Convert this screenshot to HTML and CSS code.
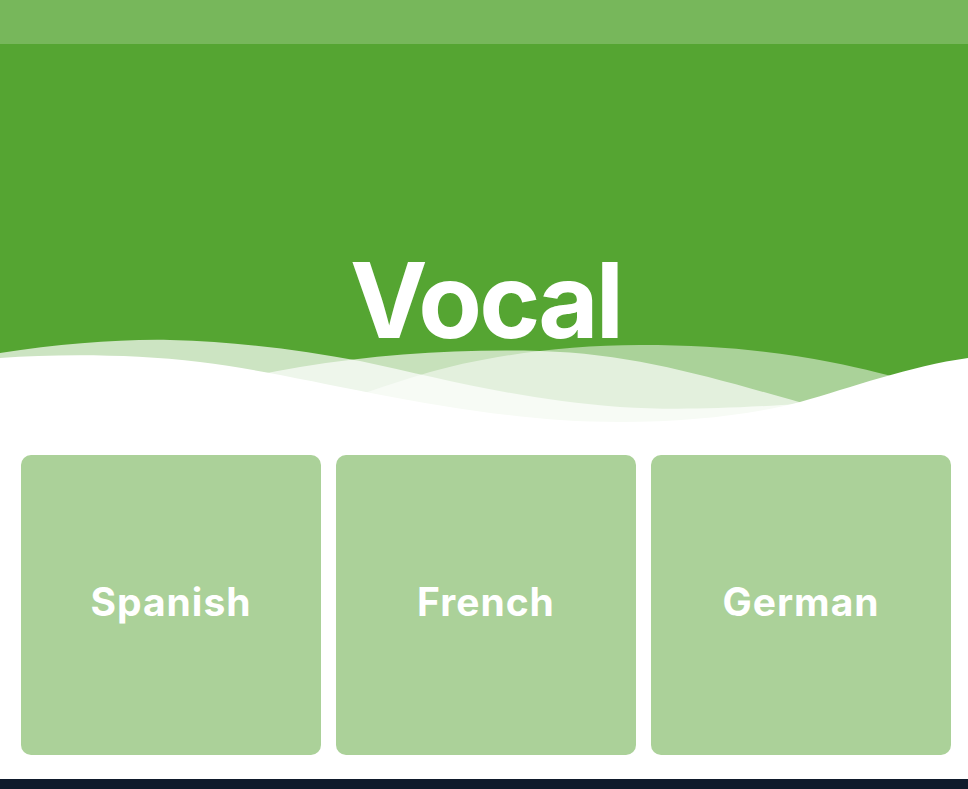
FILE: index.html
```html
<!DOCTYPE html>
<html lang="en">
<head>
<meta charset="utf-8">
<title>Vocal</title>
<link rel="stylesheet" href="styles.css">
</head>
<body>
<div class="topbar"></div>
<header class="hero">
  <h1 class="title">Vocal</h1>
  <svg class="waves" viewBox="0 8 968 92" preserveAspectRatio="none" aria-hidden="true">
    <path fill="#fff" fill-opacity="0.7" d="M0,23 C60,14 120,9 170,10 C240,12 300,20 360,31 C440,48 520,70 620,77 C700,82 780,76 968,62 V100 H0 Z"/>
    <path fill="#fff" fill-opacity="0.67" d="M0,90 C120,80 220,50 300,37 C380,24 460,19 540,21 C640,24 720,50 820,78 C880,92 930,98 968,100 V100 H0 Z"/>
    <path fill="#fff" fill-opacity="0.5" d="M250,100 C320,80 370,60 420,45 C480,27 560,15 640,15 C720,15 780,22 830,32 C900,46 940,60 968,70 V100 Z"/>
    <path fill="#fff" d="M0,28 C60,24 130,24 200,32 C300,44 420,80 560,90 C650,96 740,88 800,72 C850,58 910,36 968,28 V100 H0 Z"/>
  </svg>
</header>
<main class="languages">
  <a class="card" href="#">Spanish</a>
  <a class="card" href="#">French</a>
  <a class="card" href="#">German</a>
</main>
<footer class="footer"></footer>
</body>
</html>
```
FILE: styles.css
```css
html, body {
  margin: 0;
  padding: 0;
  background: #ffffff;
}
body {
  font-family: "Inter", "Roboto", "Liberation Sans", sans-serif;
  width: 968px;
  overflow: hidden;
}
.topbar {
  height: 44px;
  background: #77b75b;
}
.hero {
  background: #55a532;
  padding-top: 204px;
  display: flex;
  flex-direction: column;
}
.title {
  margin: 0;
  text-align: center;
  color: #ffffff;
  font-size: 104px;
  line-height: 104px;
  font-weight: 700;
  letter-spacing: -3px;
  padding-left: 3px;
}
.waves {
  display: block;
  width: 968px;
  height: 92px;
  margin-top: -14px;
}
.languages {
  display: grid;
  grid-template-columns: repeat(3, 300px);
  gap: 15px;
  padding: 25px 17px 24px 21px;
}
.card {
  height: 300px;
  border-radius: 10px;
  background: #abd199;
  color: #ffffff;
  text-decoration: none;
  font-size: 39px;
  font-weight: 700;
  letter-spacing: 1px;
  display: flex;
  align-items: center;
  justify-content: center;
  padding-bottom: 8px;
  box-sizing: border-box;
}
.footer {
  height: 60px;
  background: #0f1a2b;
}
```
